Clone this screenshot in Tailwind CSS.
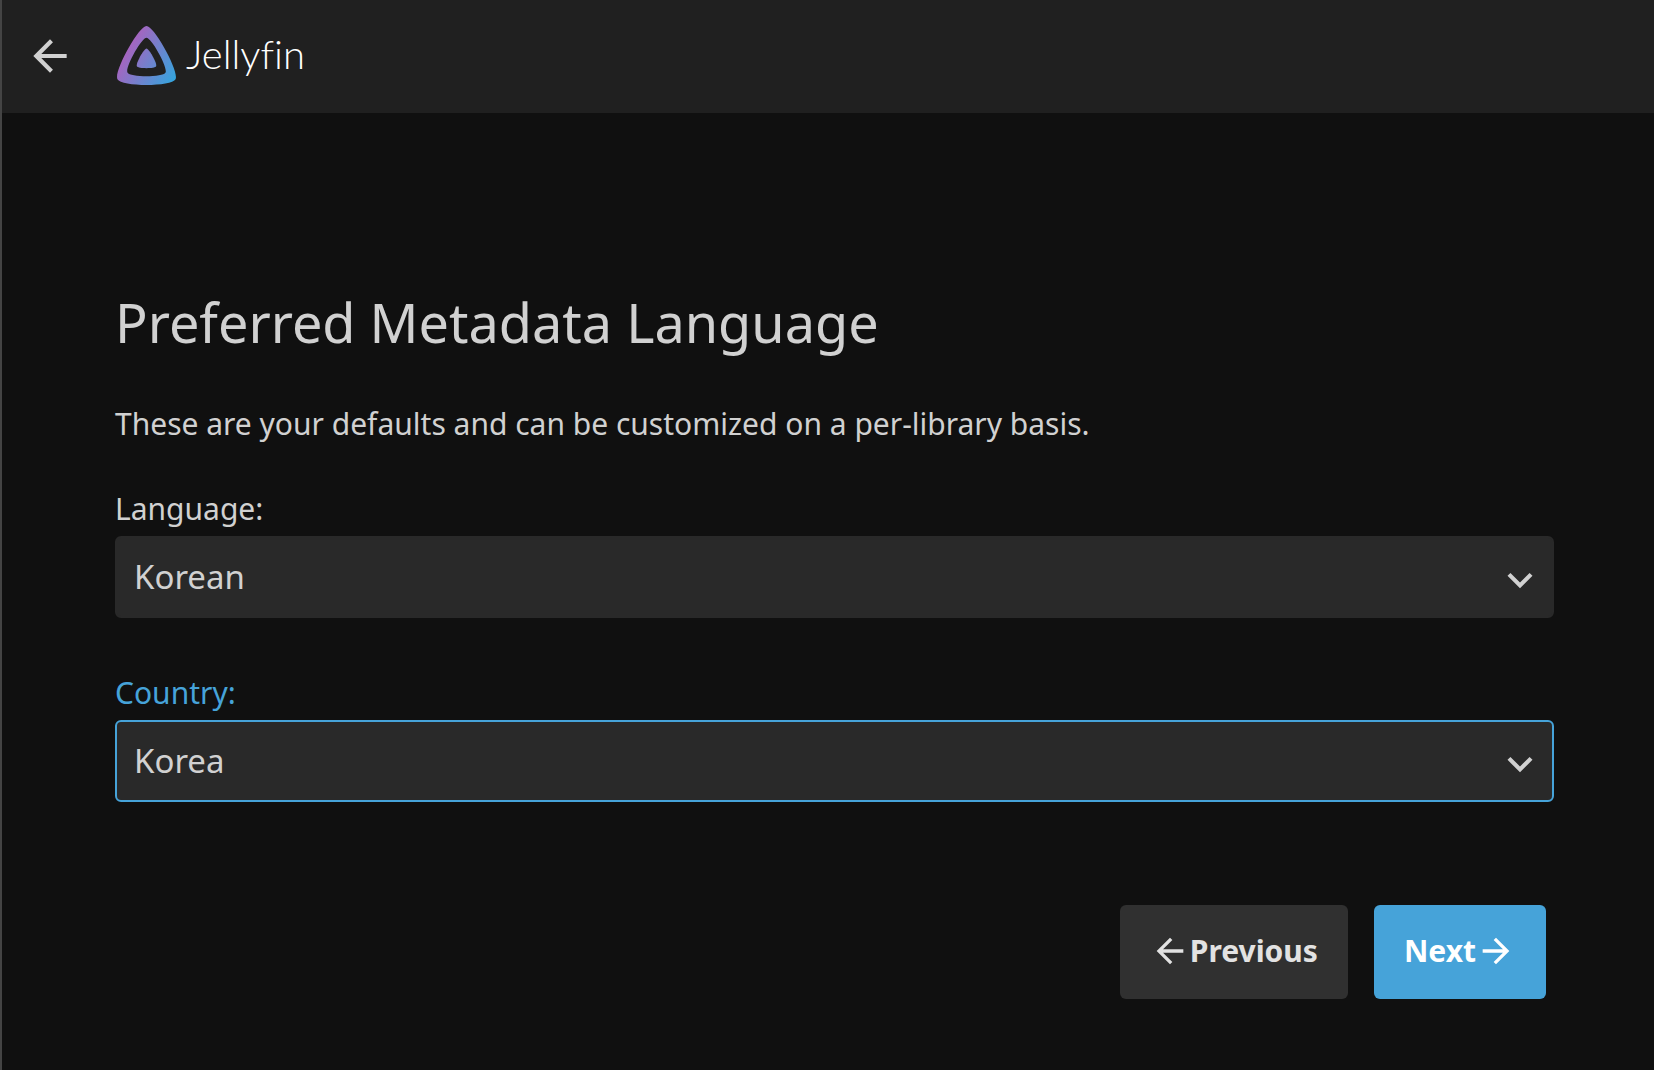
<!DOCTYPE html>
<html lang="en">
<head>
<meta charset="utf-8">
<meta name="viewport" content="width=device-width, initial-scale=1">
<title>Jellyfin</title>
<script src="https://cdn.jsdelivr.net/npm/@tailwindcss/browser@4"></script>
</head>
<body class="min-h-screen border-l-2 border-[#444444] bg-[#101010] font-['Noto_Sans',sans-serif] text-[30px] leading-10 text-[#d1d1d1]">
  <header class="flex h-[113px] items-center gap-[42px] bg-[#202020] pb-[2px] pl-[23px]">
    <button type="button" aria-label="Back" class="shrink-0">
      <svg class="size-[50px]" viewBox="0 0 24 24" fill="currentColor" aria-hidden="true"><path d="M20 11H7.83l5.59-5.59L12 4l-8 8 8 8 1.41-1.41L7.83 13H20v-2z"/></svg>
    </button>
    <a href="#" class="flex items-center gap-[10px] text-white">
      <svg class="size-[59px]" viewBox="23 23 466 466" aria-hidden="true">
        <defs>
          <linearGradient id="brand" gradientUnits="userSpaceOnUse" x1="110.25" y1="213.3" x2="496.14" y2="436.09">
            <stop offset="0" stop-color="#a465c0"/>
            <stop offset="1" stop-color="#32a6de"/>
          </linearGradient>
        </defs>
        <path fill="url(#brand)" d="M256,201.6c-20.4,0-86.2,119.3-76.2,139.4s142.5,19.9,152.4,0S276.5,201.6,256,201.6z"/>
        <path fill="url(#brand)" fill-rule="evenodd" d="M256,23.3c-61.6,0-259.8,359.4-229.6,420.1s429.3,60,459.2,0S317.6,23.3,256,23.3z M406.5,390.8c-19.6,39.3-281.1,39.8-300.9,0s110.1-275.3,150.4-275.3S426.1,351.4,406.5,390.8z"/>
      </svg>
      <span class="pb-[4px] font-['Lato',sans-serif] text-[40px] font-light [font-variant-ligatures:none]">Jellyfin</span>
    </a>
  </header>

  <main class="pt-[172px] pr-[100px] pb-[70px] pl-[113px]">
    <form>
      <h1 class="text-[54px] leading-[74px]">Preferred Metadata Language</h1>
      <p class="mt-[45px]">These are your defaults and can be customized on a per-library basis.</p>

      <div class="mt-[45px]">
        <label for="language" class="block">Language:</label>
        <div class="relative mt-[7px]">
          <select id="language" class="block h-[82px] w-full appearance-none rounded-md border-2 border-[#292929] bg-[#292929] px-[17px] text-[33px] outline-none">
            <option>Korean</option>
          </select>
          <svg class="pointer-events-none absolute top-[19px] right-[9px] size-[50px]" viewBox="0 0 24 24" fill="currentColor" aria-hidden="true"><path d="M16.59 8.59L12 13.17 7.41 8.59 6 10l6 6 6-6z"/></svg>
        </div>
      </div>

      <div class="mt-[55px]">
        <label for="country" class="block text-[#46a3d9]">Country:</label>
        <div class="relative mt-[7px]">
          <select id="country" class="block h-[82px] w-full appearance-none rounded-md border-2 border-[#46a3d9] bg-[#292929] px-[17px] text-[33px] outline-none">
            <option>Korea</option>
          </select>
          <svg class="pointer-events-none absolute top-[19px] right-[9px] size-[50px]" viewBox="0 0 24 24" fill="currentColor" aria-hidden="true"><path d="M16.59 8.59L12 13.17 7.41 8.59 6 10l6 6 6-6z"/></svg>
        </div>
      </div>

      <div class="mt-[103px] flex justify-end gap-[26px] pr-2 font-bold">
        <button type="button" class="flex h-[94px] items-center rounded-md bg-[#303030] px-[30px] pb-[2px] text-[#e2e2e2]">
          <svg class="size-10" viewBox="0 0 24 24" fill="currentColor" aria-hidden="true"><path d="M20 11H7.83l5.59-5.59L12 4l-8 8 8 8 1.41-1.41L7.83 13H20v-2z"/></svg>
          <span>Previous</span>
        </button>
        <button type="submit" class="flex h-[94px] items-center rounded-md bg-[#46a3d9] px-[30px] pb-[2px] text-white">
          <span>Next</span>
          <svg class="size-10" viewBox="0 0 24 24" fill="currentColor" aria-hidden="true"><path d="M12 4l-1.41 1.41L16.17 11H4v2h12.17l-5.58 5.59L12 20l8-8z"/></svg>
        </button>
      </div>
    </form>
  </main>
</body>
</html>
